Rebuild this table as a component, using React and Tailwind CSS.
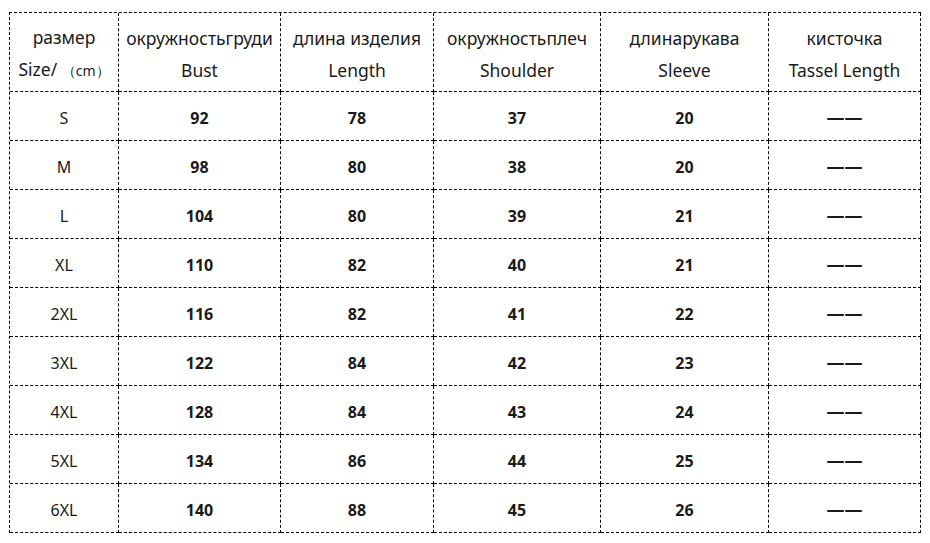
const rows = [
  ['S', 92, 78, 37, 20],
  ['M', 98, 80, 38, 20],
  ['L', 104, 80, 39, 21],
  ['XL', 110, 82, 40, 21],
  ['2XL', 116, 82, 41, 22],
  ['3XL', 122, 84, 42, 23],
  ['4XL', 128, 84, 43, 24],
  ['5XL', 134, 86, 44, 25],
  ['6XL', 140, 88, 45, 26],
];

const headers = [
  ['окружностьгруди', 'Bust'],
  ['длина изделия', 'Length'],
  ['окружностьплеч', 'Shoulder'],
  ['длинарукава', 'Sleeve'],
  ['кисточка', 'Tassel Length'],
];

const cell = 'flex items-center justify-center border-r border-b border-dashed border-black';

export default function App() {
  return (
    <div className="w-[930px] h-[543px] bg-white pt-[12px] pl-[9px] text-[#1a1a1a]" style={{ fontFamily: '"Noto Sans", "Open Sans", sans-serif' }}>
      <div className="grid grid-cols-[109px_162px_153px_167px_168px_152px] grid-rows-[79px_repeat(9,49px)] w-max border-l border-t border-dashed border-black">
        <div className={`${cell} flex-col text-[17.5px] leading-[32px] pt-[4px]`}>
          <span>размер</span>
          <span>Size/ <span className="text-[14px]">（cm）</span></span>
        </div>
        {headers.map(([ru, en]) => (
          <div key={en} className={`${cell} flex-col text-[17.5px] leading-[32px] pt-[4px]`}>
            <span>{ru}</span>
            <span>{en}</span>
          </div>
        ))}
        {rows.map((r) => (
          <div key={r[0]} className="contents">
            <div className={`${cell} text-[16px] pt-[3px]`}>{r[0]}</div>
            {r.slice(1).map((v, i) => (
              <div key={i} className={`${cell} text-[16px] font-bold pt-[3px]`}>{v}</div>
            ))}
            <div className={`${cell} text-[18px] font-bold pt-[2px]`}>——</div>
          </div>
        ))}
      </div>
    </div>
  );
}
